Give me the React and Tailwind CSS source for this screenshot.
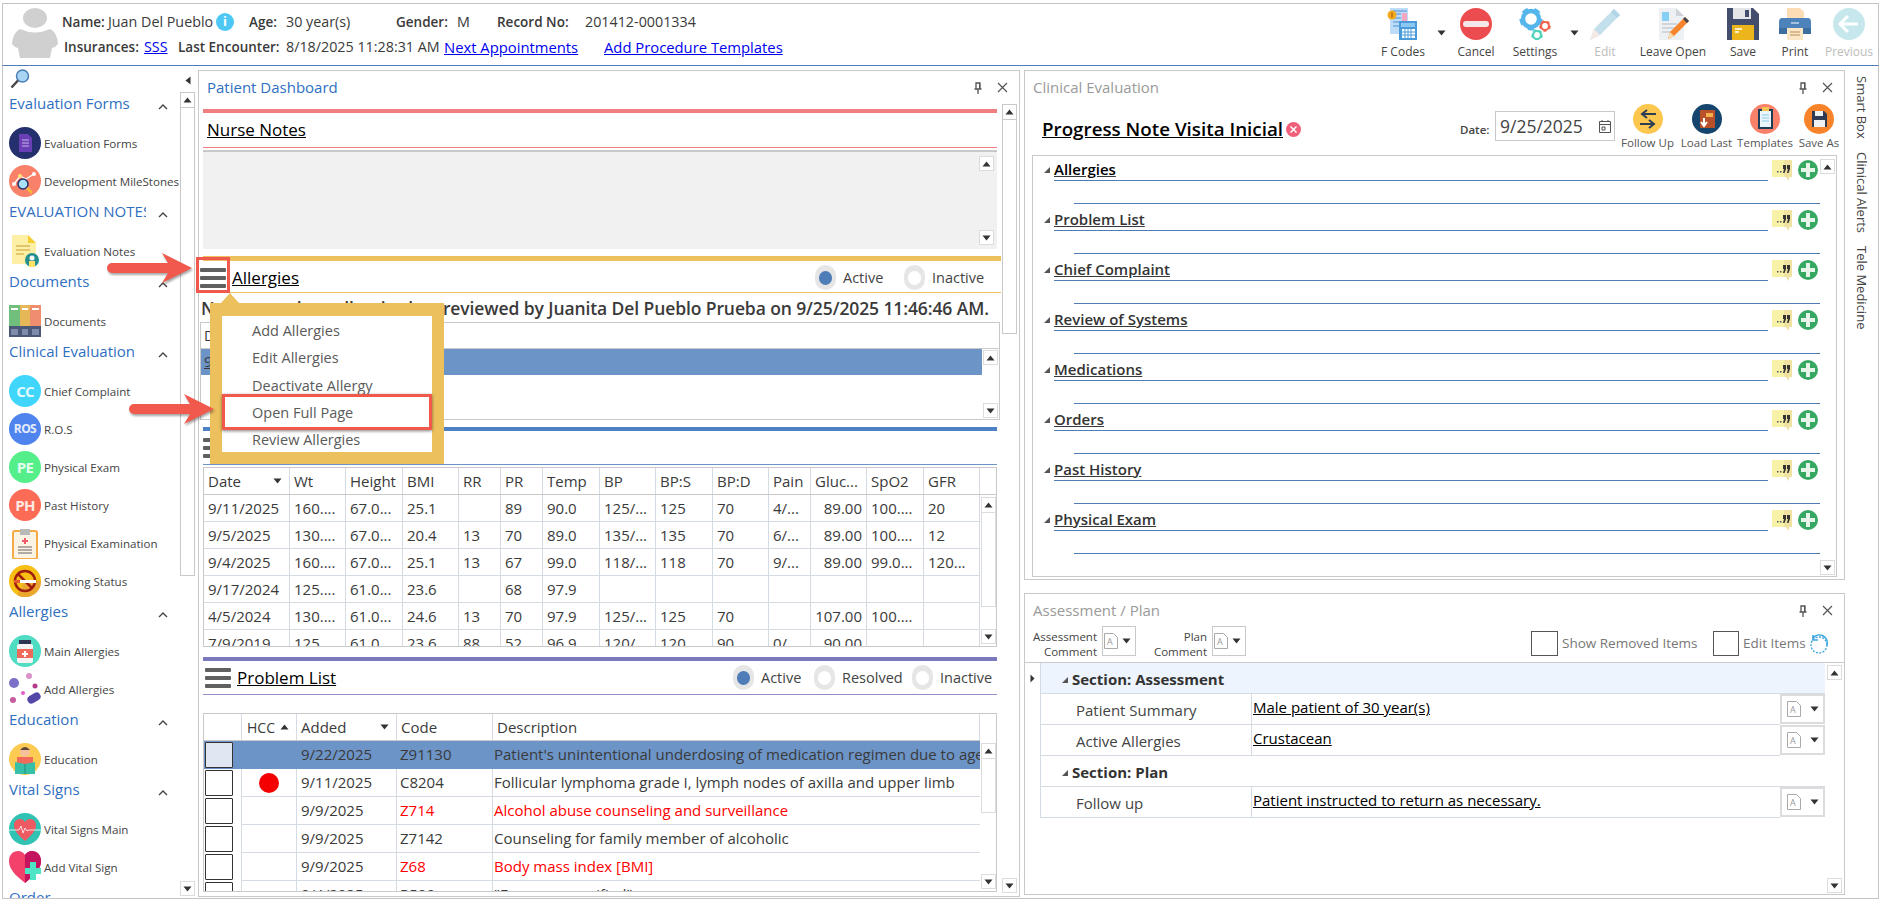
const Up = ({ className = '' }) => (
  <svg width="9" height="6" viewBox="0 0 9 6" className={className}><path d="M4.5 0.5 8.5 5.5H0.5Z" fill="#333" /></svg>
);
const Down = ({ className = '' }) => (
  <svg width="9" height="6" viewBox="0 0 9 6" className={className}><path d="M4.5 5.5 8.5 0.5H0.5Z" fill="#333" /></svg>
);
const Corner = () => (
  <svg width="8" height="8" viewBox="0 0 8 8"><path d="M7 1V7H1Z" fill="#555" /></svg>
);

const ScrollBtn = ({ down }) => (
  <div className="w-[15px] h-[15px] flex items-center justify-center border border-[#dcdcdc] bg-white shrink-0">
    {down ? <Down /> : <Up />}
  </div>
);

const Pin = () => (
  <svg width="10" height="12" viewBox="0 0 10 12"><path d="M3 1h4v6H3zM1.5 7h7M5 7v5" fill="none" stroke="#555" strokeWidth="1.3" /><path d="M6 1h1v6H6z" fill="#555" /></svg>
);
const Close = () => (
  <svg width="11" height="11" viewBox="0 0 11 11"><path d="M1 1l9 9M10 1l-9 9" stroke="#555" strokeWidth="1.2" /></svg>
);

const PanelTitle = ({ title, color = 'text-[#9a9a9a]' }) => (
  <div className="h-[33px] flex items-center pl-[8px] shrink-0">
    <span className={`text-[15px] ${color}`}>{title}</span>
    <span className="ml-auto flex items-center gap-[14px] mr-[11px]">
      <Pin />
      <Close />
    </span>
  </div>
);

const Hamburger = ({ className = '' }) => (
  <div className={`w-[26px] flex flex-col gap-[4px] ${className}`}>
    <div className="h-[4px] rounded-[1px] bg-[#606060]" />
    <div className="h-[4px] rounded-[1px] bg-[#606060]" />
    <div className="h-[4px] rounded-[1px] bg-[#606060]" />
  </div>
);

const Radio = ({ on, label, labelWidth }) => (
  <div className="flex items-center">
    <div className="w-[21px] h-[25px] rounded-full bg-[#e6e6e6] flex items-center justify-center mr-[7px]">
      <div className={`w-[13px] h-[14px] rounded-full ${on ? 'bg-[#4f7db8]' : 'bg-white'}`} />
    </div>
    <span className={`text-[14.5px] text-[#444] ${labelWidth}`}>{label}</span>
  </div>
);

// ---------- toolbar icons
const Gear = ({ cx, cy, r, color, hole }) => (
  <g>
    <circle cx={cx} cy={cy} r={r} fill="none" stroke={color} strokeWidth={r * 0.55} />
    <circle cx={cx} cy={cy} r={r * 1.25} fill="none" stroke={color} strokeWidth={r * 0.4} strokeDasharray={`${r * 0.75} ${r * 0.82}`} />
    <circle cx={cx} cy={cy} r={hole} fill="white" />
  </g>
);

const toolIcons = {
  fcodes: (
    <svg width="32" height="32" viewBox="0 0 32 32">
      <path d="M3 0H21V26H3Z" fill="#bcdcf7" />
      <path d="M6 3H20M6 6H14M6 10H14M6 14H14M6 18H12" stroke="#4a8fd6" strokeWidth="1.2" />
      <path d="M15 5H20V14H15Z" fill="#f4a7c0" />
      <path d="M12 13H30V32H12Z" fill="#4b9ad9" />
      <path d="M14 15H28V19H14Z" fill="#8cc8ef" />
      <path d="M15 21H28V30H15Z" fill="#fff" />
      <path d="M18 21V30M21 21V30M24 21V30M15 24H28M15 27H28" stroke="#4b9ad9" strokeWidth="1" />
      <circle cx="5" cy="7" r="4.5" fill="#f4a91f" />
      <path d="M5 4.5V9.5" stroke="#a8620a" strokeWidth="1.2" />
    </svg>
  ),
  cancel: (
    <svg width="32" height="32" viewBox="0 0 32 32">
      <circle cx="16" cy="16" r="16" fill="#ec4c50" />
      <rect x="3" y="13" width="26" height="6" rx="3" fill="#f6e8e8" />
    </svg>
  ),
  settings: (
    <svg width="32" height="32" viewBox="0 0 32 32">
      <Gear cx={12} cy={11} r={8} color="#55b6ec" hole={5} />
      <Gear cx={26} cy={18} r={4} color="#f2644f" hole={2} />
      <Gear cx={18} cy={27} r={4} color="#4fd4bb" hole={2} />
    </svg>
  ),
  edit: (
    <svg width="32" height="32" viewBox="0 0 32 32">
      <path d="M25 1 31 7 11 27 1 32 5 21Z" fill="#c4dfec" />
      <path d="M5 21 11 27 1 32Z" fill="#f6e9e3" />
      <path d="M25 1 31 7 28 10 22 4Z" fill="#b2d6e8" />
    </svg>
  ),
  leave: (
    <svg width="32" height="32" viewBox="0 0 32 32">
      <path d="M2 0H19L27 8V32H2Z" fill="#eef1f4" />
      <path d="M19 0 27 8H19Z" fill="#cfd4da" />
      <path d="M5 4H12V13H5Z" fill="#86d0f5" />
      <path d="M5 16H20M5 20H17M5 24H14" stroke="#c6ccd3" strokeWidth="1.5" />
      <path d="M28 9 32 13 17 28 11 31 13 24Z" fill="#f5842c" />
      <path d="M28 9 32 13 30 15 26 11Z" fill="#40464f" />
      <path d="M13 24 17 28 11 31Z" fill="#f7dcb0" />
    </svg>
  ),
  save: (
    <svg width="32" height="32" viewBox="0 0 32 32">
      <path d="M0 0H26L32 6V32H0Z" fill="#434d6c" />
      <path d="M6 0H24V11H6Z" fill="#e3e5e6" />
      <path d="M18 2H22V9H18Z" fill="#434d6c" />
      <path d="M5 17H27V32H5Z" fill="#ecb51b" />
      <path d="M8 21H15M8 24H12" stroke="#fff" strokeWidth="1.5" />
    </svg>
  ),
  print: (
    <svg width="32" height="32" viewBox="0 0 32 32">
      <path d="M8 0H21L25 4V10H8Z" fill="#fbdcb4" />
      <path d="M3 10H29Q32 10 32 14V26H0V14Q0 10 3 10Z" fill="#4d82bb" />
      <path d="M0 20H32V26H0Z" fill="#3e6da0" />
      <path d="M8 20H24V32H8Z" fill="#fbe6c6" />
      <path d="M11 24H21M11 27H21" stroke="#b98f5c" strokeWidth="1" />
      <path d="M12 15H20" stroke="#fff" strokeWidth="1" />
    </svg>
  ),
  prev: (
    <svg width="32" height="32" viewBox="0 0 32 32">
      <circle cx="16" cy="16" r="16" fill="#c6e8ec" />
      <path d="M15 8 7 16 15 24M8 16H25" fill="none" stroke="#fff" strokeWidth="3" />
    </svg>
  ),
};

const Tool = ({ icon, label, w, faded }) => (
  <div className={`flex flex-col items-center shrink-0 ${w}`}>
    <div className="h-[32px] mt-[4px]">{toolIcons[icon]}</div>
    <span className={`mt-[4px] text-[12px] leading-[16px] whitespace-nowrap ${faded ? 'text-[#bcbcbc]' : 'text-[#444]'}`}>{label}</span>
  </div>
);

const ToolCaret = ({ w }) => (
  <div className={`shrink-0 flex justify-center pt-[26px] ${w}`}>
    <Down />
  </div>
);

// ---------- sidebar icons
const TextCircle = ({ text, color, size = 'text-[15px]' }) => (
  <div className={`w-[32px] h-[32px] rounded-full flex items-center justify-center font-bold text-white/85 tracking-tighter ${color} ${size}`}>{text}</div>
);

const sideIcons = {
  forms: (
    <svg width="32" height="32" viewBox="0 0 32 32">
      <circle cx="16" cy="16" r="16" fill="#24306d" />
      <path d="M10 7H19L23 11V25H10Z" fill="#6a3fb5" />
      <path d="M13 13H20M13 16H20M13 19H20" stroke="#c9b6ea" strokeWidth="1" />
    </svg>
  ),
  mile: (
    <svg width="32" height="32" viewBox="0 0 32 32">
      <circle cx="16" cy="16" r="16" fill="#f9816a" />
      <path d="M5 19 11 11 17 14 25 9" fill="none" stroke="#fff" strokeWidth="1.3" />
      <circle cx="5" cy="19" r="2" fill="#fff" /><circle cx="11" cy="11" r="2" fill="#fde27a" /><circle cx="25" cy="9" r="2" fill="#fff" />
      <circle cx="14" cy="19" r="5" fill="#a8e0f5" stroke="#24306d" strokeWidth="1.5" />
      <path d="M18 23 23 28" stroke="#f6b93b" strokeWidth="2.5" />
    </svg>
  ),
  notes: (
    <svg width="32" height="32" viewBox="0 0 32 32">
      <path d="M3 0H19L27 8V29H3Z" fill="#fdf0a6" />
      <path d="M19 0 27 8H19Z" fill="#f6cc33" />
      <path d="M7 11H21M7 15H21M7 19H15" stroke="#d9b85a" strokeWidth="1.5" />
      <circle cx="23" cy="25" r="7" fill="#268f8d" />
      <path d="M20 32V26H26V32Z" fill="#f9e16a" />
      <circle cx="23" cy="23" r="2.5" fill="#fff" />
    </svg>
  ),
  docs: (
    <svg width="32" height="32" viewBox="0 0 32 32">
      <path d="M0 0H11V32H0Z" fill="#70bf7d" /><path d="M11 0H21V32H11Z" fill="#e5b757" /><path d="M21 0H32V32H21Z" fill="#ee8e6e" />
      <path d="M0 21H32V32H0Z" fill="#4c5878" />
      <path d="M2 3H9V5H2ZM13 3H19V5H13ZM23 3H30V5H23Z" fill="#fff" />
      <path d="M2 24H9V30H2ZM13 24H19V30H13ZM23 24H30V30H23Z" fill="#7e8bab" />
    </svg>
  ),
  exam: (
    <svg width="32" height="32" viewBox="0 0 32 32">
      <rect x="4" y="4" width="24" height="28" rx="2" fill="#fbf3e4" stroke="#f4ab45" strokeWidth="2" />
      <path d="M11 2H21V8H11Z" fill="#b9b9b9" />
      <path d="M15 11H17V13H19V15H17V17H15V15H13V13H15Z" fill="#ef5b6d" />
      <path d="M9 20H23M9 23H23M9 26H23" stroke="#666" strokeWidth="1" />
    </svg>
  ),
  smoke: (
    <svg width="32" height="32" viewBox="0 0 32 32">
      <circle cx="16" cy="16" r="16" fill="#f7be14" />
      <path d="M16 16 32 16A16 16 0 0 1 8 30Z" fill="#eba830" />
      <circle cx="16" cy="16" r="10" fill="none" stroke="#a01e10" strokeWidth="2.5" />
      <path d="M9 9 23 23" stroke="#a01e10" strokeWidth="2.5" />
      <path d="M5 15H27V18H5Z" fill="#fff" />
      <path d="M5 15H11V18H5Z" fill="#e2572c" />
    </svg>
  ),
  mainAll: (
    <svg width="32" height="32" viewBox="0 0 32 32">
      <circle cx="16" cy="16" r="16" fill="#4fdcc3" />
      <path d="M10 5H22V9H10Z" fill="#2f3550" />
      <rect x="8" y="9" width="16" height="19" rx="2" fill="#f4f4f4" />
      <path d="M8 14H24V23H8Z" fill="#ef6a5a" />
      <path d="M15 16H17V18H19V20H17V22H15V20H13V18H15Z" fill="#fff" />
    </svg>
  ),
  addAll: (
    <svg width="32" height="32" viewBox="0 0 32 32">
      <circle cx="5" cy="10" r="5" fill="#7b71c9" />
      <circle cx="20" cy="3" r="3" fill="#dc92c6" />
      <circle cx="26" cy="13" r="2.5" fill="#b33b8a" />
      <circle cx="14" cy="20" r="2" fill="#e45ec0" />
      <circle cx="4" cy="27" r="3" fill="#c75c9f" />
      <rect x="18" y="21" width="14" height="8" rx="4" fill="#5347a8" transform="rotate(-30 25 25)" />
    </svg>
  ),
  edu: (
    <svg width="32" height="32" viewBox="0 0 32 32">
      <circle cx="16" cy="16" r="16" fill="#fdcb52" />
      <circle cx="16" cy="9" r="5" fill="#f6c09a" />
      <path d="M11 7Q16 1 21 7Z" fill="#5b4535" />
      <path d="M8 14H24V22H8Z" fill="#f26a5c" />
      <path d="M6 19 16 21 26 19V31L16 31H6Z" fill="#37bfa8" />
      <path d="M16 21V31" stroke="#208f7e" strokeWidth="1" />
    </svg>
  ),
  vital: (
    <svg width="32" height="32" viewBox="0 0 32 32">
      <circle cx="16" cy="16" r="16" fill="#30c3b3" />
      <path d="M16 28C8 21 5 17 5 12 5 8 8 6 11 6 13 6 15 7 16 9 17 7 19 6 21 6 24 6 27 8 27 12 27 17 24 21 16 28Z" fill="#ee5a62" />
      <path d="M0 17H10L12 13 14 20 16 15 18 18 20 17H32" fill="none" stroke="#fff" strokeWidth="0.8" />
    </svg>
  ),
  addVital: (
    <svg width="32" height="32" viewBox="0 0 32 32">
      <path d="M16 32C6 24 0 18 0 10 0 4 4 0 9 0 12 0 15 2 16 4 17 2 20 0 23 0 28 0 32 4 32 10 32 18 26 24 16 32Z" fill="#f2426b" />
      <path d="M16 32V4C17 2 20 0 23 0 28 0 32 4 32 10 32 18 26 24 16 32Z" fill="#c4145f" />
      <path d="M21 11H27V17H32V23H27V29H21V23H16V17H21Z" fill="#4ee4c6" />
    </svg>
  ),
};

const sideGroups = [
  { title: 'Evaluation Forms', items: [['Evaluation Forms', sideIcons.forms], ['Development MileStones', sideIcons.mile]] },
  { title: 'EVALUATION NOTES', items: [['Evaluation Notes', sideIcons.notes]] },
  { title: 'Documents', items: [['Documents', sideIcons.docs]] },
  {
    title: 'Clinical Evaluation',
    items: [
      ['Chief Complaint', <TextCircle text="CC" color="bg-[#40d6fb]" />],
      ['R.O.S', <TextCircle text="ROS" color="bg-[#4f84ef]" size="text-[12px]" />],
      ['Physical Exam', <TextCircle text="PE" color="bg-[#54ee8b]" />],
      ['Past History', <TextCircle text="PH" color="bg-[#fb6b55]" />],
      ['Physical Examination', sideIcons.exam],
      ['Smoking Status', sideIcons.smoke],
    ],
  },
  { title: 'Allergies', items: [['Main Allergies', sideIcons.mainAll], ['Add Allergies', sideIcons.addAll]] },
  { title: 'Education', items: [['Education', sideIcons.edu]] },
  { title: 'Vital Signs', items: [['Vital Signs Main', sideIcons.vital], ['Add Vital Sign', sideIcons.addVital]] },
  { title: 'Order', items: [] },
];

const Chevron = () => (
  <svg width="10" height="6" viewBox="0 0 10 6" className="shrink-0"><path d="M1 5 5 1 9 5" fill="none" stroke="#444" strokeWidth="1.4" /></svg>
);

const Sidebar = () => (
  <div className="w-[195px] shrink-0 flex flex-col">
    <div className="h-[26px] flex items-center pl-[7px] shrink-0 relative">
      <svg width="20" height="20" viewBox="0 0 20 20">
        <circle cx="12.5" cy="7" r="6" fill="#a9d4f3" stroke="#4a7fb5" strokeWidth="1.5" />
        <path d="M8 11.5 1.5 18.5" stroke="#444" strokeWidth="2.4" />
      </svg>
      <div className="absolute left-[182px] top-[10px]"><svg width="6" height="9" viewBox="0 0 6 9"><path d="M5.5 0.5V8.5L0.5 4.5Z" fill="#333" /></svg></div>
    </div>
    <div className="flex flex-1 min-h-0">
      <div className="w-[177px] overflow-hidden pl-[6px]">
        {sideGroups.map((group) => (
          <div key={group.title}>
            <div className="h-[32px] flex items-start">
              <span className="w-[137px] overflow-hidden whitespace-nowrap text-[15px] leading-[22px] text-[#2f6fc2]">{group.title}</span>
              <span className="ml-[12px] mt-[12px]"><Chevron /></span>
            </div>
            {group.items.map(([label, icon]) => (
              <div key={label} className="h-[38px] flex items-center">
                <div className="w-[32px] h-[32px] shrink-0">{icon}</div>
                <span className="ml-[3px] pt-[2px] text-[11.6px] text-[#444] whitespace-nowrap">{label}</span>
              </div>
            ))}
          </div>
        ))}
      </div>
      <div className="w-[15px] flex flex-col">
        <div className="h-[484px] border border-[#c8c8c8] bg-white"><div className="h-[15px] border-b border-[#c8c8c8] flex items-center justify-center"><Up /></div></div>
        <div className="mt-auto mb-[2px]"><ScrollBtn down /></div>
      </div>
    </div>
  </div>
);

// ---------- dashboard
const vitalsCols = 'grid grid-cols-[86px_56px_57px_56px_42px_42px_57px_56px_57px_56px_42px_56px_57px_56px]';
const vitalsHead = ['Date', 'Wt', 'Height', 'BMI', 'RR', 'PR', 'Temp', 'BP', 'BP:S', 'BP:D', 'Pain', 'Gluc...', 'SpO2', 'GFR'];
const vitalsRows = [
  ['9/11/2025', '160....', '67.0...', '25.1', '', '89', '90.0', '125/...', '125', '70', '4/...', '89.00', '100....', '20'],
  ['9/5/2025', '130....', '67.0...', '20.4', '13', '70', '89.0', '135/...', '135', '70', '6/...', '89.00', '100....', '12'],
  ['9/4/2025', '160....', '67.0...', '25.1', '13', '67', '99.0', '118/...', '118', '70', '9/...', '89.00', '99.0...', '120...'],
  ['9/17/2024', '125....', '61.0...', '23.6', '', '68', '97.9', '', '', '', '', '', '', ''],
  ['4/5/2024', '130....', '61.0...', '24.6', '13', '70', '97.9', '125/...', '125', '70', '', '107.00', '100....', ''],
  ['7/9/2019', '125....', '61.0...', '23.6', '88', '52', '96.9', '120/...', '120', '90', '0/...', '90.00', '', ''],
];

const VitalsTable = () => (
  <div className="mt-[2px] h-[180px] border border-[#c9c9c9] overflow-hidden flex flex-col">
    <div className="flex h-[27px] shrink-0 border-b border-[#c9c9c9]">
      <div className={`${vitalsCols} w-[776px]`}>
        {vitalsHead.map((h, i) => (
          <div key={h} className="border-r border-[#d4dbe2] px-[4px] text-[15px] leading-[26px] whitespace-nowrap flex items-center justify-between overflow-hidden">
            {h}
            {i === 0 && <span className="mr-[3px]"><Down /></span>}
          </div>
        ))}
      </div>
    </div>
    <div className="flex flex-1 min-h-0">
      <div className="w-[776px] overflow-hidden">
        {vitalsRows.map((row) => (
          <div key={row[0]} className={`${vitalsCols} h-[27px]`}>
            {row.map((c, i) => (
              <div key={i} className={`border-r border-b border-[#d4dbe2] px-[4px] text-[15px] leading-[26px] whitespace-nowrap ${i === 11 ? 'text-right' : ''}`}>{c}</div>
            ))}
          </div>
        ))}
      </div>
      <div className="flex-1 flex flex-col items-center pt-[2px] pb-[2px]">
        <div className="h-[110px] w-[15px] border border-[#dcdcdc]"><div className="h-[15px] border-b border-[#dcdcdc] flex items-center justify-center"><Up /></div></div>
        <div className="mt-auto"><ScrollBtn down /></div>
      </div>
    </div>
  </div>
);

const problemCols = 'grid grid-cols-[38px_55px_100px_96px_487px]';
const problemRows = [
  { added: '9/22/2025', code: 'Z91130', desc: "Patient's unintentional underdosing of medication regimen due to age-related debility", sel: true },
  { added: '9/11/2025', code: 'C8204', desc: 'Follicular lymphoma grade I, lymph nodes of axilla and upper limb', dot: true },
  { added: '9/9/2025', code: 'Z714', desc: 'Alcohol abuse counseling and surveillance', red: true },
  { added: '9/9/2025', code: 'Z7142', desc: 'Counseling for family member of alcoholic' },
  { added: '9/9/2025', code: 'Z68', desc: 'Body mass index [BMI]', red: true },
  { added: '9/4/2025', code: 'R509', desc: '"Fever, unspecified"' },
];

const ProblemTable = () => (
  <div className="mt-[18px] h-[179px] border border-[#c9c9c9] overflow-hidden flex flex-col">
    <div className={`${problemCols} h-[27px] shrink-0 border-b border-[#c9c9c9] w-[776px]`}>
      <div className="border-r border-[#d4dbe2]" />
      <div className="border-r border-[#d4dbe2] px-[5px] text-[14px] flex items-center gap-[5px]">HCC <Up /></div>
      <div className="border-r border-[#d4dbe2] px-[4px] text-[15px] flex items-center justify-between">Added <span className="mr-[3px]"><Down /></span></div>
      <div className="border-r border-[#d4dbe2] px-[4px] text-[15px] flex items-center">Code</div>
      <div className="border-r border-[#d4dbe2] px-[4px] text-[15px] flex items-center">Description</div>
    </div>
    <div className="flex flex-1 min-h-0">
      <div className="w-[776px] overflow-hidden">
        {problemRows.map((r) => (
          <div key={r.code} className={`${problemCols} h-[28px] text-[15px] ${r.sel ? 'bg-[#6c94c7]' : ''}`}>
            <div className={`border-r ${r.sel ? 'border-[#6c94c7]' : 'border-[#d4dbe2]'} flex items-center justify-start pl-[1px]`}>
              <div className={`w-[28px] h-[26px] border border-[#333] rounded-[1px] ${r.sel ? 'bg-[#e0e7f2]' : 'bg-white'}`} />
            </div>
            <div className={`border-r ${r.sel ? 'border-[#6c94c7]' : 'border-[#d4dbe2] border-b'} flex items-center justify-center`}>
              {r.dot && <div className="w-[20px] h-[20px] rounded-full bg-[#f40000]" />}
            </div>
            <div className={`border-r ${r.sel ? 'border-[#6c94c7]' : 'border-[#d4dbe2] border-b'} px-[4px] leading-[27px]`}>{r.added}</div>
            <div className={`border-r ${r.sel ? 'border-[#6c94c7]' : 'border-[#d4dbe2] border-b'} px-[3px] leading-[27px] ${r.red ? 'text-[#ff0000]' : ''}`}>{r.code}</div>
            <div className={`${r.sel ? '' : 'border-b border-[#d4dbe2]'} ${r.red ? 'text-[#ff0000]' : ''} pl-[1px] leading-[27px] whitespace-nowrap overflow-hidden`}>{r.desc}</div>
          </div>
        ))}
      </div>
      <div className="flex-1 flex flex-col items-center pt-[2px] pb-[2px]">
        <div className="h-[70px] w-[15px] border border-[#dcdcdc]"><div className="h-[15px] border-b border-[#dcdcdc] flex items-center justify-center"><Up /></div></div>
        <div className="mt-auto"><ScrollBtn down /></div>
      </div>
    </div>
  </div>
);

const Dashboard = () => (
  <div className="w-[822px] shrink-0 mt-[4px] mb-[1px] border border-[#c9c9c9] flex flex-col">
    <PanelTitle title="Patient Dashboard" color="text-[#2f6fc2]" />
    <div className="flex flex-1 min-h-0">
      <div className="w-[799px] pl-[4px] pr-[1px] shrink-0">
        <div className="mt-[5px] h-[4px] bg-[#f08080]" />
        <div className="h-[35px] border-b border-[#f08080] flex items-center pl-[4px]">
          <span className="text-[17px] underline text-black">Nurse Notes</span>
        </div>
        <div className="mt-[2px] h-[99px] bg-[#f1f1f1] border-t-2 border-[#c9c9c9] flex flex-col items-end pr-[3px] pt-[4px] pb-[4px]">
          <ScrollBtn />
          <div className="mt-auto"><ScrollBtn down /></div>
        </div>
        <div className="mt-[7px] h-[5px] bg-[#edc05e] -mr-[4px]" />
        <div className="h-[32px] border-b border-[#edc05e] -mr-[4px] flex items-center pt-[2px]">
          <Hamburger className="-ml-[3px]" />
          <span className="ml-[6px] text-[17px] underline text-black">Allergies</span>
          <div className="ml-auto flex items-center gap-[10px] mr-[7px]">
            <Radio on label="Active" labelWidth="w-[51px]" />
            <Radio label="Inactive" labelWidth="w-[62px]" />
          </div>
        </div>
        <div className="h-[29px] flex items-center -ml-[2px] text-[17.5px] font-semibold whitespace-nowrap tracking-[-0.1px] pt-[1px]">
          No known drug allergies last reviewed by Juanita Del Pueblo Prueba on 9/25/2025 11:46:46 AM.
        </div>
        <div className="h-[98px] border border-[#c9c9c9] -ml-[3px] -mr-[3px] flex flex-col">
          <div className="h-[26px] border-b border-[#c9c9c9] px-[3px] text-[14.5px] leading-[25px] shrink-0">D</div>
          <div className="flex flex-1 min-h-0">
            <div className="w-[781px] h-[26px] bg-[#6c94c7] px-[3px] text-[14.5px] leading-[26px] shrink-0 underline">9</div>
            <div className="flex-1 flex flex-col items-center py-[1px]">
              <ScrollBtn />
              <div className="mt-auto"><ScrollBtn down /></div>
            </div>
          </div>
        </div>
        <div className="mt-[7px] h-[4px] bg-[#4d80c4]" />
        <div className="h-[34px] border-b border-[#6c94c7] flex items-center">
          <Hamburger />
        </div>
        <VitalsTable />
        <div className="mt-[10px] h-[4px] bg-[#7b78bd]" />
        <div className="h-[34px] border-b border-[#8f8cc9] flex items-center">
          <Hamburger className="ml-[2px]" />
          <span className="ml-[6px] text-[17px] underline text-black">Problem List</span>
          <div className="ml-auto flex items-center gap-[10px]">
            <Radio on label="Active" labelWidth="w-[43px]" />
            <Radio label="Resolved" labelWidth="w-[60px]" />
            <Radio label="Inactive" labelWidth="w-[57px]" />
          </div>
        </div>
        <ProblemTable />
      </div>
      <div className="ml-[4px] w-[15px] flex flex-col pb-[3px]">
        <div className="h-[230px] border border-[#c9c9c9]"><div className="h-[15px] border-b border-[#c9c9c9] flex items-center justify-center"><Up /></div></div>
        <div className="mt-auto"><ScrollBtn down /></div>
      </div>
    </div>
  </div>
);

// ---------- clinical evaluation
const RoundBtn = ({ label, w, children }) => (
  <div className={`flex flex-col items-center shrink-0 ${w}`}>
    {children}
    <span className="mt-[1px] text-[11.5px] leading-[16px] text-[#555] whitespace-nowrap">{label}</span>
  </div>
);

const clinicalRows = ['Allergies', 'Problem List', 'Chief Complaint', 'Review of Systems', 'Medications', 'Orders', 'Past History', 'Physical Exam'];

const ClinicalRow = ({ title, first }) => (
  <div className="h-[50px] shrink-0">
    <div className="flex h-[25px]">
      <div className="w-[21px] shrink-0 flex items-center justify-end pr-[3px] pt-[3px]"><Corner /></div>
      <div className="w-[714px] shrink-0 border-b border-[#4f7cb3] text-[15px] font-semibold underline leading-[26px]">
        <span className={first ? 'text-black' : 'text-[#333]'}>{title}</span>
      </div>
      <svg width="20" height="21" viewBox="0 0 20 21" className="ml-[4px] mt-[4px] shrink-0">
        <path d="M0 0H20V17H17V21L14 17H0Z" fill="#f7f2a8" />
        <path d="M12 0H20V17H17V21L14 17H12Z" fill="#f0e2a0" />
        <path d="M5 11H6.5V12.5H5ZM8 11H9.5V12.5H8Z" fill="#555" />
        <path d="M11 5H14V9L12.5 13H11L12 9H11ZM15 5H18V9L16.5 13H15L16 9H15Z" fill="#333" />
      </svg>
      <div className="ml-[6px] mt-[4px] w-[20px] h-[20px] rounded-full bg-[#36a862] flex items-center justify-center">
        <svg width="14" height="14" viewBox="0 0 14 14"><path d="M5 0H9V5H14V9H9V14H5V9H0V5H5Z" fill="#e6f4e9" /></svg>
      </div>
    </div>
    <div className="ml-[41px] w-[746px] h-[23px] border-b border-[#4f7cb3]" />
  </div>
);

const Clinical = () => (
  <div className="h-[510px] shrink-0 border border-[#c9c9c9] flex flex-col">
    <PanelTitle title="Clinical Evaluation" />
    <div className="h-[51px] flex shrink-0 pl-[17px]">
      <div className="w-[418px] flex items-center">
        <span className="text-[18.8px] font-semibold underline text-black whitespace-nowrap">Progress Note Visita Inicial</span>
        <span className="ml-[3px] w-[15px] h-[15px] rounded-full bg-[#f0607a] flex items-center justify-center">
          <svg width="7" height="7" viewBox="0 0 7 7"><path d="M0.5 0.5l6 6M6.5 0.5l-6 6" stroke="#fff" strokeWidth="1.5" /></svg>
        </span>
      </div>
      <span className="text-[11.5px] font-semibold text-[#444] w-[35px] mt-[17px]">Date:</span>
      <div className="w-[120px] h-[30px] mt-[7px] border border-[#c9c9c9] flex items-center pl-[4px] text-[17.5px] text-[#444] shrink-0">
        9/25/2025
        <svg width="12" height="13" viewBox="0 0 12 13" className="ml-auto mr-[3px]"><path d="M0.5 1.5H11.5V12.5H0.5ZM0.5 4.5H11.5M3 0V2M9 0V2M3 7H6V10H3Z" fill="none" stroke="#555" strokeWidth="1" /></svg>
      </div>
      <div className="flex ml-[3px]">
        <RoundBtn label="Follow Up" w="w-[59px]">
          <svg width="30" height="30" viewBox="0 0 30 30"><circle cx="15" cy="15" r="15" fill="#fbc74f" /><path d="M10 10H23M14 6 9 10 14 14M20 20H7M16 16 21 20 16 24" fill="none" stroke="#2c3e55" strokeWidth="2" /></svg>
        </RoundBtn>
        <RoundBtn label="Load Last" w="w-[59px]">
          <svg width="30" height="30" viewBox="0 0 30 30"><circle cx="15" cy="15" r="15" fill="#15446c" /><path d="M8 6H23V24H8Z" fill="#b9502a" /><path d="M14 9H21V13H14Z" fill="#f2b04a" /><path d="M12 14V21M9 18 12 22 15 18" fill="none" stroke="#fff" strokeWidth="2" /></svg>
        </RoundBtn>
        <RoundBtn label="Templates" w="w-[58px]">
          <svg width="30" height="30" viewBox="0 0 30 30"><circle cx="15" cy="15" r="15" fill="#f9816a" /><path d="M8 5H23V25H8Z" fill="#1c3f57" /><path d="M10 7H21V23H10Z" fill="#eaf6fb" /><path d="M12 11H19M12 14H19M12 17H19" stroke="#8ccbe8" strokeWidth="1" /><path d="M12 3H19V7H12Z" fill="#f6c552" /></svg>
        </RoundBtn>
        <RoundBtn label="Save As" w="w-[50px]">
          <svg width="30" height="30" viewBox="0 0 30 30"><circle cx="15" cy="15" r="15" fill="#f7842a" /><path d="M8 7H20L23 10V23H8Z" fill="#2f3a55" /><path d="M11 7H19V12H11ZM10 16H21V23H10Z" fill="#eef1f4" /></svg>
        </RoundBtn>
      </div>
    </div>
    <div className="mx-[7px] mb-[2px] flex-1 min-h-0 border border-[#c9c9c9] flex flex-col relative">
      {clinicalRows.map((t, i) => <ClinicalRow key={t} title={t} first={i === 0} />)}
      <div className="absolute right-[1px] top-[3px] bottom-[1px] flex flex-col">
        <ScrollBtn />
        <div className="mt-auto"><ScrollBtn down /></div>
      </div>
    </div>
  </div>
);

// ---------- assessment / plan
const NoteBtn = () => (
  <svg width="14" height="16" viewBox="0 0 14 16"><path d="M0.5 0.5H9.5L13.5 4.5V15.5H0.5Z" fill="#fff" stroke="#aaa" /><text x="3" y="12" fontSize="9" fill="#999">A</text></svg>
);

const CommentBtn = () => (
  <div className="w-[34px] h-[30px] border border-[#c9c9c9] flex items-center gap-[4px] pl-[1px]">
    <NoteBtn />
    <Down />
  </div>
);

const GridRow = ({ label, value }) => (
  <div className="flex h-[31px]">
    <div className="w-[211px] shrink-0 border-r border-b border-[#d4dbe2] pl-[35px] pt-[2px] text-[15px] text-[#444] leading-[28px]">{label}</div>
    <div className="w-[528px] shrink-0 border-b border-[#d4dbe2] text-[15px] underline text-black leading-[26px] whitespace-nowrap pl-[1px]">{value}</div>
    <div className="w-[45px] shrink-0 h-[30px] border-2 border-[#dcdcdc] flex items-center gap-[9px] pl-[5px]">
      <NoteBtn />
      <Down />
    </div>
  </div>
);

const SectionRow = ({ title, bg }) => (
  <div className={`h-[31px] border-b border-[#d4dbe2] flex items-center pt-[3px] w-[784px] ${bg}`}>
    <span className="ml-[20px] mr-[3px]"><Corner /></span>
    <span className="text-[15px] font-bold text-[#333]">{title}</span>
  </div>
);

const Assessment = () => (
  <div className="mt-[13px] h-[302px] shrink-0 border border-[#c9c9c9] flex flex-col">
    <PanelTitle title="Assessment / Plan" />
    <div className="h-[36px] flex items-start shrink-0 pl-[8px] border-b border-[#c9c9c9]">
      <div className="w-[64px] text-right text-[11.5px] leading-[15px] text-[#444] pt-[2px]">Assessment<br />Comment</div>
      <div className="ml-[5px] -mt-[1px]"><CommentBtn /></div>
      <div className="ml-[35px] w-[36px] text-right text-[11.5px] leading-[15px] text-[#444] whitespace-nowrap pt-[2px] flex flex-col items-end">Plan<br />Comment</div>
      <div className="ml-[5px] -mt-[1px]"><CommentBtn /></div>
      <div className="ml-[285px] w-[27px] h-[25px] mt-[4px] border border-[#555] bg-white" />
      <span className="ml-[4px] text-[13.5px] text-[#777] leading-[32px] w-[151px] whitespace-nowrap">Show Removed Items</span>
      <div className="w-[26px] h-[25px] mt-[4px] border border-[#555] bg-white" />
      <span className="ml-[4px] text-[13.5px] text-[#777] leading-[32px] w-[65px] whitespace-nowrap">Edit Items</span>
      <svg width="22" height="22" viewBox="0 0 22 22" className="mt-[6px]">
        <circle cx="11" cy="12" r="8" fill="none" stroke="#3ba6e0" strokeWidth="1.4" strokeDasharray="2 1.4" />
        <path d="M5 5A8 8 0 0 1 19 12" fill="none" stroke="#3ba6e0" strokeWidth="1.6" />
        <path d="M5 2V7H10" fill="none" stroke="#3ba6e0" strokeWidth="1.6" />
      </svg>
    </div>
    <div className="flex flex-1 min-h-0 relative">
      <div className="w-[16px] shrink-0 border-r border-[#d4dbe2] h-[155px] flex justify-center pt-[11px]">
        <svg width="5" height="9" viewBox="0 0 5 9"><path d="M0.5 0.5V8.5L4.5 4.5Z" fill="#333" /></svg>
      </div>
      <div>
        <SectionRow title="Section: Assessment" bg="bg-[#edf4fd]" />
        <GridRow label="Patient Summary" value="Male patient of 30 year(s)" />
        <GridRow label="Active Allergies" value="Crustacean" />
        <SectionRow title="Section: Plan" />
        <GridRow label="Follow up" value="Patient instructed to return as necessary." />
      </div>
      <div className="absolute right-[2px] top-[2px] bottom-[1px] flex flex-col">
        <ScrollBtn />
        <div className="mt-auto"><ScrollBtn down /></div>
      </div>
    </div>
  </div>
);

// ---------- callouts over the page
const Arrow = ({ className }) => (
  <svg width="88" height="32" viewBox="0 0 88 32" className={`absolute drop-shadow-[1px_2px_1px_rgba(0,0,0,0.35)] ${className}`}>
    <path d="M6 11H62L56 1 86 16 56 31 62 21H6A5 5 0 0 1 6 11Z" fill="#f0594c" />
  </svg>
);

const AllergyMenu = () => (
  <div className="absolute left-[210px] top-[303px] w-[234px] h-[161px] bg-[#edc05e] pl-[12px] pr-[12px] pt-[13px]">
    <div className="absolute left-[11px] -top-[10px] w-0 h-0 border-l-[9px] border-r-[9px] border-b-[10px] border-l-transparent border-r-transparent border-b-[#edc05e]" />
    <div className="relative bg-white h-[136px] pt-[1px] text-[14.5px] text-[#5a5a5a]">
      {['Add Allergies', 'Edit Allergies', 'Deactivate Allergy', 'Open Full Page', 'Review Allergies'].map((item) => (
        <div key={item} className="h-[27.3px] pl-[30px] leading-[27px]">{item}</div>
      ))}
      <div className="absolute left-0 right-0 top-[78px] h-[36px] border-[3px] border-[#f0594c] shadow-[0_1px_3px_rgba(0,0,0,0.5)]" />
    </div>
  </div>
);

export default function App() {
  return (
    <div className="w-[1889px] h-[903px] relative overflow-hidden bg-white text-[#3a3a3a] font-['Open_Sans','Noto_Sans',sans-serif]">
      <div className="mt-[3px] ml-[2px] w-[1877px] h-[63px] border border-[#c4c4c4] border-b-[#4f7cb3] flex">
        <svg width="46" height="50" viewBox="0 0 46 50" className="ml-[9px] mt-[4px] shrink-0">
          <ellipse cx="23" cy="10" rx="12" ry="10" fill="#d0d0d0" />
          <path d="M8 21 Q23 28 38 21 Q45 24 46 36 Q44 39 40 40 L38 50 H8 L6 40 Q2 39 0 36 Q1 24 8 21Z" fill="#d0d0d0" />
        </svg>
        <div className="ml-[4px] shrink-0 text-[14.3px]">
          <div className="h-[24px] mt-[6px] flex items-center whitespace-nowrap">
            <span className="w-[46px] font-semibold text-[13.5px]">Name:</span>
            <span className="w-[108px]">Juan Del Pueblo</span>
            <span className="w-[18px] h-[18px] rounded-full bg-[#4dc8f5] text-white text-[13px] font-bold flex items-center justify-center mr-[15px]">i</span>
            <span className="w-[37px] font-semibold text-[13.5px]">Age:</span>
            <span className="w-[110px]">30 year(s)</span>
            <span className="w-[61px] font-semibold text-[13.5px]">Gender:</span>
            <span className="w-[40px]">M</span>
            <span className="w-[88px] font-semibold text-[13.5px]">Record No:</span>
            <span>201412-0001334</span>
          </div>
          <div className="h-[24px] mt-[1px] ml-[2px] flex items-center whitespace-nowrap">
            <span className="w-[80px] font-semibold text-[13.5px]">Insurances:</span>
            <span className="w-[34px] underline text-[#0000ee]">SSS</span>
            <span className="w-[108px] font-semibold text-[13.5px]">Last Encounter:</span>
            <span className="w-[158px]">8/18/2025 11:28:31 AM</span>
            <span className="w-[160px] underline text-[#0000ee] text-[14.8px]">Next Appointments</span>
            <span className="underline text-[#0000ee] text-[14.8px]">Add Procedure Templates</span>
          </div>
        </div>
        <div className="ml-auto flex mr-[1px]">
          <Tool icon="fcodes" label="F Codes" w="w-[60px]" />
          <ToolCaret w="w-[16px]" />
          <Tool icon="cancel" label="Cancel" w="w-[54px]" />
          <Tool icon="settings" label="Settings" w="w-[64px]" />
          <ToolCaret w="w-[14px]" />
          <Tool icon="edit" label="Edit" w="w-[48px]" faded />
          <Tool icon="leave" label="Leave Open" w="w-[88px]" />
          <Tool icon="save" label="Save" w="w-[52px]" />
          <Tool icon="print" label="Print" w="w-[52px]" />
          <Tool icon="prev" label="Previous" w="w-[56px]" faded />
        </div>
      </div>

      <div className="ml-[2px] w-[1877px] h-[833px] border-l border-r border-b border-[#c4c4c4] flex">
        <Sidebar />
        <Dashboard />
        <div className="ml-[4px] w-[821px] shrink-0 mt-[4px] flex flex-col">
          <Clinical />
          <Assessment />
        </div>
        <div className="flex-1 pt-[10px] pr-[7px] [writing-mode:vertical-rl] text-[13px] text-[#444] flex gap-[13px] whitespace-nowrap">
          <span>Smart Box</span>
          <span>Clinical Alerts</span>
          <span>Tele Medicine</span>
        </div>
      </div>

      <AllergyMenu />
      <div className="absolute left-[196px] top-[257px] w-[34px] h-[36px] border-[3px] border-[#f0594c]" />
      <Arrow className="left-[106px] top-[252px]" />
      <Arrow className="left-[128px] top-[393px]" />
    </div>
  );
}
